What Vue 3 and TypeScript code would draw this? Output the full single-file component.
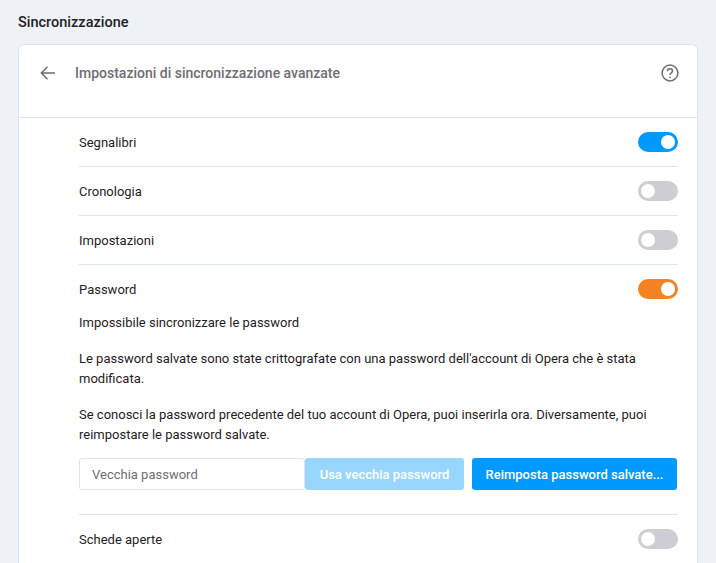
<template>
  <div class="page">
    <h2 class="page-title">Sincronizzazione</h2>
    <section class="card">
      <header class="card-head">
        <button class="back" aria-label="Indietro">
          <svg viewBox="0 0 18 18" width="18" height="18" fill="none" stroke="#6e6e73" stroke-width="1.5">
            <path d="M16 9H2.5M8.5 2.8 2.3 9l6.2 6.2" />
          </svg>
        </button>
        <span class="head-title">Impostazioni di sincronizzazione avanzate</span>
        <svg class="help" viewBox="0 0 18 18" width="18" height="18" fill="none" stroke="#6e6e73" stroke-width="1.5">
          <circle cx="9" cy="9" r="7.9" />
          <path d="M6.5 7.2c0-1.5 1.1-2.4 2.5-2.4s2.5.9 2.5 2.2c0 1.9-2.5 1.9-2.5 4" />
          <circle cx="9" cy="13.3" r=".9" fill="#6e6e73" stroke="none" />
        </svg>
      </header>
      <div class="list">
        <div v-for="row in topRows" :key="row.label" class="row">
          <span>{{ row.label }}</span>
          <span :class="['toggle', { on: row.on }]"></span>
        </div>
        <div class="pw-block">
          <div class="pw-head">
            <span>Password</span>
            <span class="toggle warn"></span>
          </div>
          <p class="msg first">Impossibile sincronizzare le password</p>
          <p class="msg">Le password salvate sono state crittografate con una password dell'account di Opera che è stata modificata.</p>
          <p class="msg">Se conosci la password precedente del tuo account di Opera, puoi inserirla ora. Diversamente, puoi reimpostare le password salvate.</p>
          <div class="pw-actions">
            <input class="pw-input" type="text" placeholder="Vecchia password" />
            <button class="btn disabled">Usa vecchia password</button>
            <button class="btn primary">Reimposta password salvate...</button>
          </div>
        </div>
        <div class="row last">
          <span>Schede aperte</span>
          <span class="toggle"></span>
        </div>
      </div>
    </section>
  </div>
</template>

<script setup lang="ts">
const topRows = [
  { label: 'Segnalibri', on: true },
  { label: 'Cronologia', on: false },
  { label: 'Impostazioni', on: false },
]
</script>

<style>
html,
body {
  margin: 0;
  background: #eef2f7;
  overflow: hidden;
}
</style>

<style scoped>
.page {
  height: 563px;
  padding: 0 18px;
  box-sizing: border-box;
  overflow: hidden;
  font-family: Roboto, "Noto Sans", sans-serif;
  font-size: 13px;
  color: #1f2125;
  background: #eef2f7;
}

.page-title {
  margin: 0;
  height: 44px;
  line-height: 46px;
  font-size: 14.5px;
  font-weight: 500;
  color: #1f2125;
}

.card {
  background: #fff;
  border: 1px solid #dce4ed;
  border-bottom: 0;
  border-radius: 6px 6px 0 0;
  min-height: 540px;
}

.card-head {
  display: flex;
  align-items: flex-start;
  height: 73px;
  padding: 19px 18px 0 20px;
  box-sizing: border-box;
  border-bottom: 1px solid #dce4ed;
}

.back {
  width: 18px;
  height: 18px;
  padding: 0;
  margin-right: 18px;
  border: 0;
  background: none;
}

.head-title {
  font-size: 14px;
  font-weight: 500;
  line-height: 18px;
  color: #6e6e73;
  flex: 1;
}

.list {
  padding: 0 19px 0 60px;
}

.row {
  display: flex;
  align-items: center;
  justify-content: space-between;
  height: 48px;
  border-bottom: 1px solid #dce4ed;
}

.row.last {
  border-bottom: 0;
}

.toggle {
  position: relative;
  display: block;
  width: 40px;
  height: 20px;
  border-radius: 10px;
  background: #cdcdd3;
}

.toggle::after {
  content: "";
  position: absolute;
  top: 3px;
  left: 3px;
  width: 14px;
  height: 14px;
  border-radius: 50%;
  background: #fff;
}

.toggle.on {
  background: #0099ff;
}

.toggle.warn {
  background: #f58220;
}

.toggle.on::after,
.toggle.warn::after {
  left: 23px;
}

.pw-block {
  padding: 14px 0 24px;
  border-bottom: 1px solid #dce4ed;
}

.pw-head {
  display: flex;
  align-items: center;
  justify-content: space-between;
  height: 20px;
}

.msg {
  margin: 16px 0 0;
  line-height: 20px;
}

.msg.first {
  margin-top: 14px;
}

.pw-actions {
  display: flex;
  margin-top: 13px;
}

.pw-input {
  width: 226px;
  height: 32px;
  padding: 0 12px;
  box-sizing: border-box;
  border: 1px solid #dce4ed;
  border-radius: 3px;
  font: inherit;
  outline: none;
}

.pw-input::placeholder {
  color: #6e6e73;
  opacity: 1;
}

.btn {
  height: 32px;
  padding: 0;
  border: 0;
  border-radius: 3px;
  font: inherit;
  font-weight: 500;
  color: #fff;
}

.btn.disabled {
  width: 159px;
  background: #99d6ff;
}

.btn.primary {
  width: 205px;
  margin-left: 8px;
  background: #0099ff;
}
</style>
